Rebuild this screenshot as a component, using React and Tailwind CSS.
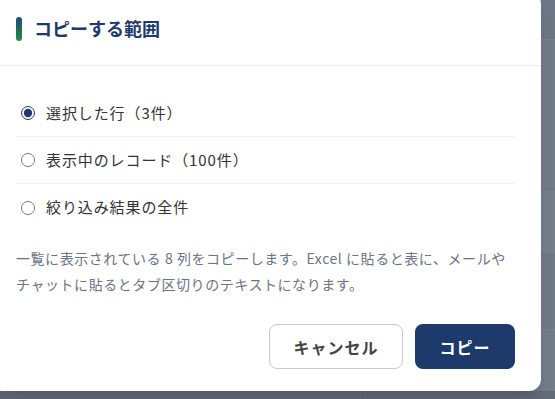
import { useState } from 'react'

const options = [
  { id: 'selected', label: '選択した行（3件）' },
  { id: 'visible', label: '表示中のレコード（100件）' },
  { id: 'all', label: '絞り込み結果の全件' },
]

export default function App() {
  const [scope, setScope] = useState('selected')

  return (
    <div
      className="relative w-[555px] h-[399px] overflow-hidden bg-[#737a88]"
      style={{ fontFamily: '"Noto Sans CJK JP", "Noto Sans", sans-serif' }}
    >
      {/* dimmed page behind the dialog */}
      <div className="flex flex-col h-full">
        <div className="h-[40px] bg-[#6e7584] border-b border-[#7a8190]" />
        <div className="h-[150px] border-b border-[#6c7381]" />
        <div className="h-[65px] bg-[#767d8b] border-b border-[#6c7381]" />
        <div className="h-[75px] bg-[#717886] border-b border-[#7a8190]" />
        <div className="h-[61px] bg-[#747b89]" />
        <div className="flex-1 flex bg-[#646b79]">
          <div className="w-[363px] border-r border-[#5d6472]" />
        </div>
      </div>

      {/* dialog */}
      <div className="absolute left-[-10px] top-[-8px] w-[551px] h-[399px] bg-white rounded-xl shadow-xl flex flex-col">
        <div className="h-[74px] flex items-center gap-[12px] pl-[26px] border-b border-[#ececef]">
          <span className="w-[6px] h-[24px] rounded-full bg-gradient-to-b from-[#1d4a78] to-[#2f8a3b]" />
          <h2 className="text-[18px] font-bold text-[#1e3a6b]">コピーする範囲</h2>
        </div>

        <div className="flex flex-col px-[26px] pt-[24px]">
          {options.map((o, i) => (
            <label
              key={o.id}
              className={`h-[47px] flex items-center gap-[11px] pl-[5px] cursor-pointer ${
                i < options.length - 1 ? 'border-b border-[#f0f0f2]' : ''
              }`}
            >
              <input
                type="radio"
                name="scope"
                checked={scope === o.id}
                onChange={() => setScope(o.id)}
                className="m-0 w-[14px] h-[14px] accent-[#1e3a6b]"
              />
              <span className="text-[15px] tracking-[0.06em] text-[#333333]">{o.label}</span>
            </label>
          ))}

          <p className="mt-[14px] text-[14px] leading-[26px] tracking-[0.04em] text-[#6b7384]">
            一覧に表示されている 8 列をコピーします。Excel に貼ると表に、メールや
            <br />
            チャットに貼るとタブ区切りのテキストになります。
          </p>

          <div className="mt-[27px] flex justify-end gap-[12px]">
            <button className="w-[134px] h-[45px] rounded-lg border border-[#c9c9cc] bg-white text-[16px] font-bold tracking-[0.06em] text-[#444444]">
              キャンセル
            </button>
            <button className="w-[100px] h-[45px] rounded-lg bg-[#1e3a6b] text-[16px] font-bold tracking-[0.06em] text-white">
              コピー
            </button>
          </div>
        </div>
      </div>
    </div>
  )
}
